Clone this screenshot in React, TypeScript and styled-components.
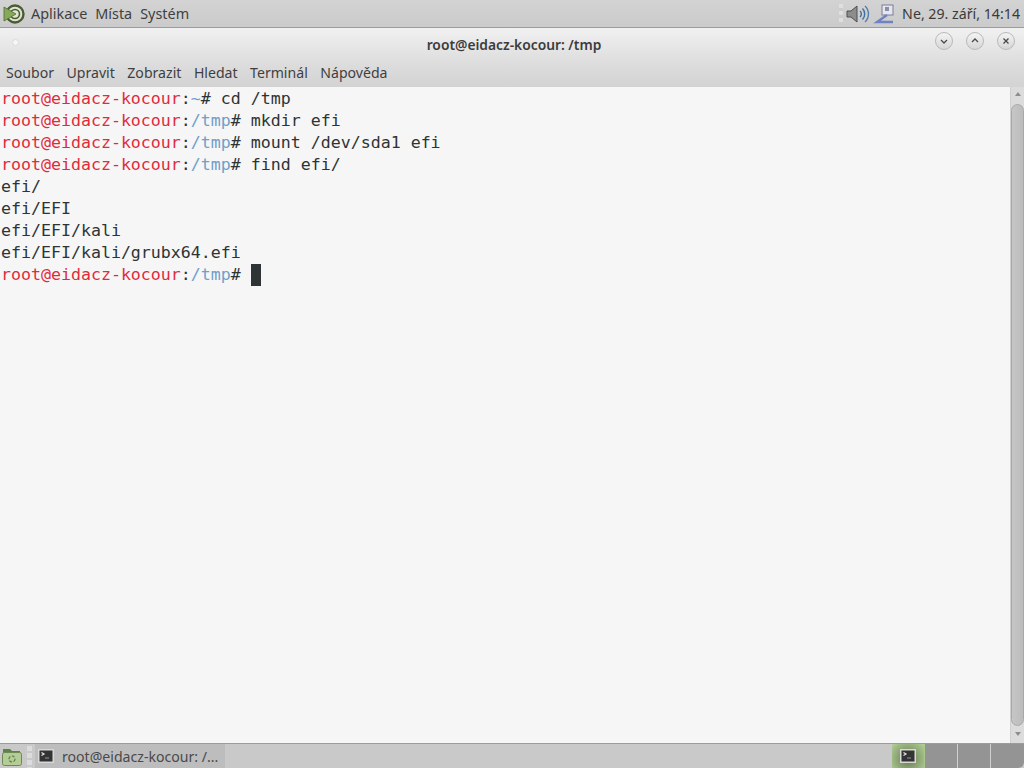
import styled, { createGlobalStyle } from "styled-components";

const GlobalStyle = createGlobalStyle`
  html, body {
    margin: 0;
    padding: 0;
    background: #f5f5f5;
  }
`;

const Screen = styled.div`
  width: 1024px;
  height: 768px;
  display: flex;
  flex-direction: column;
  overflow: hidden;
  font-family: "Noto Sans", "Open Sans", sans-serif;
  color: #3c3c3c;
`;

const TopPanel = styled.div`
  height: 27px;
  flex: none;
  display: flex;
  align-items: center;
  background: linear-gradient(#d3d3d3, #cbcbcb);
  border-bottom: 1px solid #9c9c9c;
  font-size: 14.4px;
`;

const PanelMenu = styled.div`
  display: flex;
  align-items: center;
  padding-left: 3px;
  gap: 8px;
  flex: 1;
`;

const PanelLabel = styled.span<{ $first?: boolean }>`
  margin-left: ${(p) => (p.$first ? "-2px" : "0")};
  color: #3f3f3f;
`;

const Tray = styled.div`
  display: flex;
  align-items: center;
  gap: 3px;
  padding-right: 4px;
`;

const TrayHandle = styled.div`
  width: 4px;
  height: 20px;
  background: repeating-linear-gradient(#dfdfdf 0 4px, #cdcdcd 4px 7px);
`;

const Clock = styled.span`
  margin-left: 4px;
  font-size: 14.2px;
  color: #3a3a3a;
  white-space: nowrap;
`;

const TitleBar = styled.div`
  height: 33px;
  flex: none;
  display: flex;
  align-items: center;
  padding: 0 9px 0 12px;
  background: linear-gradient(#f1f1f1, #dedede);
`;

const TitleDot = styled.div`
  width: 7px;
  height: 7px;
  border-radius: 50%;
  background: #f6f6f6;
  border: 1px solid #dcdcdc;
  box-sizing: border-box;
  margin-top: -5px;
`;

const TitleText = styled.div`
  flex: 1;
  text-align: center;
  font-size: 13.8px;
  font-weight: 600;
  color: #3c3c3c;
  padding-left: 74px;
`;

const WindowButtons = styled.div`
  display: flex;
  gap: 13px;
  margin-top: -7px;
`;

const WindowButton = styled.div`
  width: 16px;
  height: 16px;
  border-radius: 50%;
  border: 1px solid #b9b9b9;
  background: linear-gradient(#f4f4f4, #d6d6d6);
  display: flex;
  align-items: center;
  justify-content: center;
`;

const MenuBar = styled.div`
  height: 26px;
  flex: none;
  display: flex;
  align-items: center;
  gap: 12.5px;
  padding: 0 6px 3px;
  box-sizing: border-box;
  background: linear-gradient(#dedede, #d3d3d3);
  font-size: 14.1px;
  color: #3f3f3f;
`;

const TerminalArea = styled.div`
  flex: 1;
  display: flex;
  min-height: 0;
`;

const Output = styled.div`
  flex: 1;
  background: #f6f6f6;
  padding: 1px 0 0 1px;
  font-family: "DejaVu Sans Mono", "Liberation Mono", monospace;
  font-size: 16.6px;
  line-height: 22px;
  color: #2e3436;
  white-space: pre;
`;

const Line = styled.div`
  height: 22px;
  display: flex;
  align-items: center;
`;

const User = styled.span`
  color: #e02b3c;
`;

const Path = styled.span`
  color: #6f9fcb;
`;

const Cursor = styled.span`
  display: inline-block;
  width: 10px;
  height: 22px;
  background: #2e3436;
`;

const Scrollbar = styled.div`
  width: 14px;
  flex: none;
  display: flex;
  flex-direction: column;
  align-items: center;
  background: #dcdcdc;
  border-left: 1px solid #d0d0d0;
  box-sizing: border-box;
`;

const Arrow = styled.div<{ $down?: boolean }>`
  flex: none;
  width: 0;
  height: 0;
  margin: ${(p) => (p.$down ? "6px 0 7px" : "5px 0 8px")};
  border-left: 3px solid transparent;
  border-right: 3px solid transparent;
  ${(p) => (p.$down ? "border-top: 4px solid #8d8d8d;" : "border-bottom: 4px solid #8d8d8d;")}
`;

const Thumb = styled.div`
  flex: 1;
  width: 13px;
  border: 1px solid #a8a8a8;
  border-radius: 7px;
  box-sizing: border-box;
  background: linear-gradient(90deg, #c6c6c6, #bcbcbc);
`;

const BottomPanel = styled.div`
  height: 25px;
  flex: none;
  display: flex;
  align-items: stretch;
  background: #c9c9c9;
  border-top: 1px solid #9c9c9c;
  box-sizing: border-box;
  font-size: 14.1px;
`;

const FolderSlot = styled.div`
  width: 27px;
  display: flex;
  align-items: center;
  padding-left: 2px;
  box-sizing: border-box;
`;

const Handle = styled.div`
  width: 5px;
  margin: 2px 3px 0 0;
  background: repeating-linear-gradient(#dcdcdc 0 5px, #c9c9c9 5px 7px);
`;

const TaskButton = styled.div`
  width: 190px;
  display: flex;
  align-items: center;
  gap: 8px;
  padding-left: 3px;
  box-sizing: border-box;
  background: #bdbdbd;
  color: #4a4a4a;
  white-space: nowrap;
`;

const PanelGap = styled.div`
  flex: 1;
`;

const Workspace = styled.div<{ $active?: boolean }>`
  width: 33px;
  box-sizing: border-box;
  display: flex;
  align-items: center;
  justify-content: center;
  background: ${(p) => (p.$active ? "radial-gradient(circle at 50% 60%, #66784f, #b3d198)" : "#949494")};
  border-right: 1px solid ${(p) => (p.$active ? "#a9c98a" : "#d0d0d0")};
`;

const LastWorkspace = styled(Workspace)`
  border-right: none;
  border-bottom-right-radius: 6px;
`;

const TermIcon = ({ size }: { size: number }) => (
  <svg width={size} height={size - 2} viewBox="0 0 16 14">
    <rect x="0.750" y="0.750" width="14.500" height="12.500" fill="#333" stroke="#d8d8d8" strokeWidth="1.500" />
    <path d="M3.500 3.500l2.500 1.500-2.500 1.500" fill="none" stroke="#e8e8e8" strokeWidth="1.200" />
    <path d="M7 9h4" stroke="#888" strokeWidth="1.200" />
  </svg>
);

const MenuLogo = () => (
  <svg width="22" height="22" viewBox="0 0 22 22">
    <circle cx="12" cy="11" r="8.500" fill="#dfe6cf" stroke="#4a5b36" strokeWidth="2.400" />
    <circle cx="12" cy="11" r="4.500" fill="none" stroke="#4a5b36" strokeWidth="1.600" />
    <path d="M1 4l12 7-12 7z" fill="#86a95a" stroke="#4f6b33" strokeWidth="0.800" />
  </svg>
);

const VolumeIcon = () => (
  <svg width="24" height="22" viewBox="0 0 24 22">
    <path d="M1 8h4l6-5v16l-6-5H1z" fill="#8d8d8d" stroke="#4e4e4e" />
    <path d="M14 8a4 4 0 0 1 0 6" fill="none" stroke="#3f6f9f" strokeWidth="1.400" />
    <path d="M16.500 5.500a8 8 0 0 1 0 11" fill="none" stroke="#3f6f9f" strokeWidth="1.400" />
    <path d="M19 3a11 11 0 0 1 0 16" fill="none" stroke="#4f7faf" strokeWidth="1.400" />
  </svg>
);

const NetworkIcon = () => (
  <svg width="22" height="22" viewBox="0 0 22 22">
    <rect x="9" y="2" width="11" height="10" fill="#e6e6ee" stroke="#7d7d9a" />
    <rect x="12" y="4" width="4" height="4" fill="#8c8cab" />
    <path d="M14 12L4 19h16" fill="none" stroke="#6f83c4" strokeWidth="2.400" />
  </svg>
);

const FolderIcon = () => (
  <svg width="20" height="19" viewBox="0 0 20 19">
    <path d="M1 2h7l2 2h8v3H1z" fill="#5f8048" />
    <rect x="0.500" y="5.500" width="19" height="13" rx="2" fill="#b4cd96" stroke="#6d8a55" />
    <circle cx="10" cy="12" r="3" fill="none" stroke="#5f7a48" strokeWidth="1.200" strokeDasharray="3 1.500" />
  </svg>
);

const Chevron = ({ d }: { d: string }) => (
  <svg width="8" height="8" viewBox="0 0 8 8">
    <path d={d} fill="none" stroke="#4a4a4a" strokeWidth="1.300" />
  </svg>
);

const Prompt = ({ path }: { path: string }) => (
  <>
    <User>root@eidacz-kocour</User>:<Path>{path}</Path>#{" "}
  </>
);

const App = () => {
  return (
    <Screen>
      <GlobalStyle />
      <TopPanel>
        <PanelMenu>
          <MenuLogo />
          <PanelLabel $first>Aplikace</PanelLabel>
          <PanelLabel>Místa</PanelLabel>
          <PanelLabel>Systém</PanelLabel>
        </PanelMenu>
        <Tray>
          <TrayHandle />
          <VolumeIcon />
          <NetworkIcon />
          <Clock>Ne, 29. září, 14:14</Clock>
        </Tray>
      </TopPanel>
      <TitleBar>
        <TitleDot />
        <TitleText>root@eidacz-kocour: /tmp</TitleText>
        <WindowButtons>
          <WindowButton><Chevron d="M1 3l3 3 3-3" /></WindowButton>
          <WindowButton><Chevron d="M1 5l3-3 3 3" /></WindowButton>
          <WindowButton><Chevron d="M1.500 1.500l5 5M6.500 1.500l-5 5" /></WindowButton>
        </WindowButtons>
      </TitleBar>
      <MenuBar>
        <span>Soubor</span>
        <span>Upravit</span>
        <span>Zobrazit</span>
        <span>Hledat</span>
        <span>Terminál</span>
        <span>Nápověda</span>
      </MenuBar>
      <TerminalArea>
        <Output>
          <Line><span><Prompt path="~" />cd /tmp</span></Line>
          <Line><span><Prompt path="/tmp" />mkdir efi</span></Line>
          <Line><span><Prompt path="/tmp" />mount /dev/sda1 efi</span></Line>
          <Line><span><Prompt path="/tmp" />find efi/</span></Line>
          <Line>efi/</Line>
          <Line>efi/EFI</Line>
          <Line>efi/EFI/kali</Line>
          <Line>efi/EFI/kali/grubx64.efi</Line>
          <Line><span><Prompt path="/tmp" /></span><Cursor /></Line>
        </Output>
        <Scrollbar>
          <Arrow />
          <Thumb />
          <Arrow $down />
        </Scrollbar>
      </TerminalArea>
      <BottomPanel>
        <FolderSlot><FolderIcon /></FolderSlot>
        <Handle />
        <TaskButton>
          <TermIcon size={16} />
          root@eidacz-kocour: /...
        </TaskButton>
        <PanelGap />
        <Workspace $active><TermIcon size={16} /></Workspace>
        <Workspace />
        <Workspace />
        <LastWorkspace />
      </BottomPanel>
    </Screen>
  );
};

export default App;
